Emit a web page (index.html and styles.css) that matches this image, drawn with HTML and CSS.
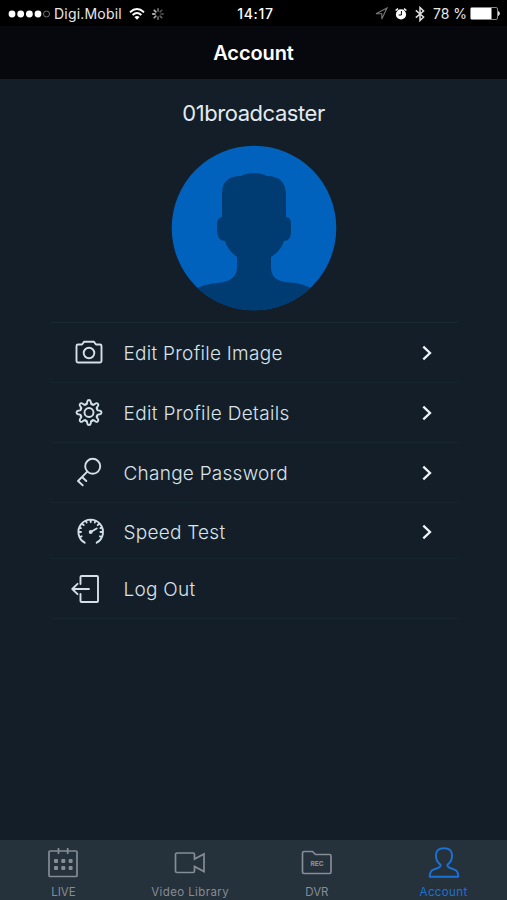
FILE: index.html
```
<!DOCTYPE html>
<html lang="en">
<head>
<meta charset="utf-8">
<title>Account</title>
<link rel="stylesheet" href="styles.css">
</head>
<body>
<div class="app">
  <div class="status">
    <div class="status-left">
      <svg class="dots" width="42" height="10" viewBox="0 0 42 10"><g fill="#fff"><circle cx="4" cy="5" r="3.4"/><circle cx="12.7" cy="5" r="3.4"/><circle cx="21.4" cy="5" r="3.4"/><circle cx="30" cy="5" r="3.4"/></g><circle cx="38.5" cy="5" r="3" fill="none" stroke="#777"/></svg>
      <span class="carrier">Digi.Mobil</span>
      <svg class="wifi" width="16" height="12" viewBox="0 0 16 12"><g fill="none" stroke="#fff" stroke-width="1.9"><path d="M1 4.2Q8-2 15 4.2"/><path d="M3.6 7Q8 3.2 12.4 7"/></g><path d="M5.4 9Q8 6.9 10.6 9L8 11.8z" fill="#fff"/></svg>
      <svg class="spinner" width="14" height="14" viewBox="-7 -7 14 14"><g stroke-width="1.6" stroke-linecap="round"><path d="M0-3v-2.300" stroke="#777"/><path d="M2.1-2.1l1.700-1.700" stroke="#555"/><path d="M3 0h2.300" stroke="#555"/><path d="M2.1 2.1l1.700 1.700" stroke="#666"/><path d="M0 3v2.300" stroke="#777"/><path d="M-2.1 2.1l-1.700 1.700" stroke="#aaa"/><path d="M-3 0h-2.300" stroke="#ddd"/><path d="M-2.1-2.1l-1.700-1.700" stroke="#bbb"/></g></svg>
    </div>
    <span class="clock">14:17</span>
    <div class="status-right">
      <svg class="location" width="13" height="13" viewBox="0 0 13 13"><path d="M1 6.7L12 1 6.8 12V6.7z" fill="none" stroke="#777" stroke-width="1.1"/></svg>
      <svg class="alarm" width="12" height="12" viewBox="0 0 12 12"><circle cx="6" cy="6.4" r="5.1" fill="#fff"/><path d="M.6 2.5L3 .7M11.4 2.5L9 .7" stroke="#fff" stroke-width="1.5"/><path d="M6.4 3v4H3.6" fill="none" stroke="#000"/></svg>
      <svg class="bluetooth" width="10" height="16" viewBox="0 0 10 16"><path d="M.8 4.4L8.6 11 5 14.5v-13L8.6 5 .8 11.6" fill="none" stroke="#ddd" stroke-width="1.5"/></svg>
      <span class="percent">78 %</span>
      <svg class="battery" width="31" height="13" viewBox="0 0 31 13"><rect x=".5" y=".5" width="27" height="12" rx="1.5" fill="none" stroke="#888"/><rect x="1" y="1" width="20.5" height="11" fill="#fff"/><path d="M28.500 4.500q2 2 0 4z" fill="#ddd" stroke="#ddd"/></svg>
    </div>
  </div>
  <header class="title">Account</header>
  <main class="content">
    <h1 class="username">01broadcaster</h1>
    <svg class="avatar" width="166" height="166" viewBox="0 0 166 166">
      <defs><clipPath id="disc"><circle cx="83" cy="83" r="82.3"/></clipPath></defs>
      <circle cx="83" cy="83" r="82.3" fill="#0062bd"/>
      <path clip-path="url(#disc)" fill="#003c72" d="M51 72V49C51 36 58 31 70 31C77 27 89 27 96 31C108 31 115 37 115 50V72C119 72 120 75 120 80V87C120 93 117 96 113 96C111 103 106 108 100 112V122C100 135 109 137 125 138C134 140 142 143 150 148V170H17V148C26 142 35 139 46 138C59 137 66 132 66 122V112C60 107 56 103 54 96C49 96 46 92 46 85V80C46 75 48 72 51 72Z"/>
    </svg>
    <nav class="menu">
      <a class="row">
        <svg class="icon" width="36" height="32" viewBox="0 0 36 32"><path d="M7 7.5h4l2.200-2.800h9.600L25 7.500h4q1.500 0 1.500 1.500v15q0 1.500-1.500 1.500H7q-1.500 0-1.500-1.500v-15q0-1.500 1.500-1.500z"/><circle cx="18" cy="16" r="5.300"/></svg>
        <span class="label image">Edit Profile Image</span>
        <svg class="chevron" width="10" height="16" viewBox="0 0 10 16"><path d="M1.300 1.700L8 8l-6.700 6.300"/></svg>
      </a>
      <a class="row">
        <svg class="icon" width="36" height="32" viewBox="-18 -15.500 36 32">
          <defs><path id="tooth" d="M-3.440-8.310C-2-7.500-2-9.500-1.700-11Q-1.400-12.500 0-12.500T1.700-11C2-9.500 2-7.500 3.440-8.310"/></defs>
          <use href="#tooth"/><use href="#tooth" transform="rotate(45)"/><use href="#tooth" transform="rotate(90)"/><use href="#tooth" transform="rotate(135)"/><use href="#tooth" transform="rotate(180)"/><use href="#tooth" transform="rotate(225)"/><use href="#tooth" transform="rotate(270)"/><use href="#tooth" transform="rotate(315)"/>
          <circle r="4.500"/></svg>
        <span class="label details">Edit Profile Details</span>
        <svg class="chevron" width="10" height="16" viewBox="0 0 10 16"><path d="M1.300 1.700L8 8l-6.700 6.300"/></svg>
      </a>
      <a class="row">
        <svg class="icon" width="36" height="32" viewBox="0 0 36 32"><circle cx="21.700" cy="9.300" r="7.500"/><path d="M16.300 14.600L7 24l4.700 4.300M11 20l4.300 4"/></svg>
        <span class="label">Change Password</span>
        <svg class="chevron" width="10" height="16" viewBox="0 0 10 16"><path d="M1.300 1.700L8 8l-6.700 6.300"/></svg>
      </a>
      <a class="row row-speed">
        <svg class="icon" width="36" height="32" viewBox="0 0 36 32"><path d="M13.700 26.700a12.300 12.300 0 1 1 12 0M19.700 4v2M8 16h2M29.500 16h2M11.400 7.800l1.300 1.300M28 7.800l-1.300 1.300M15 5l.6 1.500M24.400 5l-.6 1.500M8.300 11.500l1.600.6M31 11.500l-1.600.6M9 21l1.600-.7M30.500 21l-1.600-.7M19.700 16l6-3.500"/><circle cx="19.700" cy="16" r="1"/></svg>
        <span class="label">Speed Test</span>
        <svg class="chevron" width="10" height="16" viewBox="0 0 10 16"><path d="M1.300 1.700L8 8l-6.700 6.300"/></svg>
      </a>
      <a class="row row-logout">
        <svg class="icon" width="36" height="32" viewBox="0 0 36 32"><path d="M9.500 11V4q0-1 1-1h15.500q1 0 1 1v24q0 1-1 1H10.500q-1 0-1-1V21M18 16H1.500M6.500 10.800L1.300 16l5.200 5.200"/></svg>
        <span class="label">Log Out</span>
      </a>
    </nav>
  </main>
  <footer class="tabs">
    <div class="tab">
      <svg width="32" height="34" viewBox="0 0 32 34"><g fill="none" stroke="currentColor" stroke-width="1.700"><rect x="2" y="5" width="28" height="25.500" rx="1"/><path d="M11.500 2v6M20.700 2v6"/></g><g fill="currentColor"><rect x="7" y="13" width="4" height="4" rx="1"/><rect x="14.300" y="13" width="4" height="4" rx="1"/><rect x="21.600" y="13" width="4" height="4" rx="1"/><rect x="7" y="20" width="4" height="4" rx="1"/><rect x="14.300" y="20" width="4" height="4" rx="1"/><rect x="21.600" y="20" width="4" height="4" rx="1"/></g></svg>
      <span class="tab-label">LIVE</span>
    </div>
    <div class="tab">
      <svg width="32" height="34" viewBox="0 0 32 34"><path d="M3 7h16q1.500 0 1.500 1.500V13L30 8v17.500l-9.500-5V25q0 1.500-1.500 1.500H3q-1.500 0-1.500-1.500V8.500Q1.500 7 3 7z" fill="none" stroke="currentColor" stroke-width="1.700"/></svg>
      <span class="tab-label video">Video Library</span>
    </div>
    <div class="tab">
      <svg width="32" height="34" viewBox="0 0 32 34"><path d="M3 5.500h8.500l3 3H28.500q1.500 0 1.500 1.500v16q0 1.500-1.500 1.500H3q-1.500 0-1.500-1.500V7q0-1.500 1.500-1.500z" fill="none" stroke="currentColor" stroke-width="1.700"/><text class="rec" x="16" y="20" text-anchor="middle">REC</text></svg>
      <span class="tab-label">DVR</span>
    </div>
    <div class="tab active">
      <svg width="32" height="34" viewBox="0 0 32 34"><path d="M12.500 18.800C9 16 7.700 11.500 8 8.500C8.400 4.300 12 2.300 16 2.300S23.600 4.300 24 8.500C24.300 11.500 23 16 19.500 18.800Q19 21 22 22L26.500 23.600C29.500 24.700 30.300 27 30.300 30.700H1.700C1.700 27 2.500 24.700 5.500 23.600L10 22Q13 21 12.500 18.800Z" fill="none" stroke="currentColor" stroke-width="1.900" stroke-linejoin="round"/></svg>
      <span class="tab-label account">Account</span>
    </div>
  </footer>
</div>
</body>
</html>
```
FILE: styles.css
```
* { box-sizing: border-box; }
body { margin: 0; background: #131e29; font-family: Inter, "Liberation Sans", sans-serif; }
svg { display: block; flex: none; }
.app { width: 507px; height: 900px; display: flex; flex-direction: column; overflow: hidden; }
.status { height: 26px; background: #000; color: #e8e8e8; display: grid; grid-template-columns: 1fr auto 1fr; align-items: center; font-size: 14px; line-height: 26px; white-space: nowrap; }
.status-left { display: flex; align-items: center; padding-left: 8px; }
.carrier { margin: 1px 0 0 4px; width: 68px; letter-spacing: 0.2px; }
.wifi { margin-left: 7px; }
.spinner { margin-left: 6px; }
.clock { color: #fff; font-weight: 500; letter-spacing: 0.7px; padding-left: 4px; }
.status-right { display: flex; align-items: center; justify-content: flex-end; padding-right: 6px; }
.alarm { margin-left: 7px; }
.bluetooth { margin-left: 8px; }
.percent { margin: 1px 3px 0 8px; }
.title { height: 53px; background: #06080d; color: #fff; text-align: center; font-size: 20px; font-weight: 600; line-height: 54px; letter-spacing: -0.1px; }
.content { flex: 1; display: flex; flex-direction: column; align-items: center; background: #131e29; }
.username { margin: 17px 0 15px; font-size: 22px; line-height: 34px; font-weight: 400; letter-spacing: -0.45px; color: #e2eaf1; }
.menu { width: 406px; margin-top: 11px; border-top: 1px solid #1b2a34; }
.row { height: 60px; display: flex; align-items: center; padding: 0 25px 0 20px; border-bottom: 1px solid #182631; }
.row-speed { height: 56px; }
.row-speed .icon, .row-speed .label, .row-speed .chevron { margin-top: 3px; }
.icon { fill: none; stroke: #d3e0e8; stroke-width: 1.9; stroke-linecap: round; stroke-linejoin: round; }
.label { flex: 1; margin-left: 17px; padding-top: 1px; font-size: 19px; font-weight: 300; letter-spacing: 0.25px; color: #d8e3ea; white-space: nowrap; }
.details { letter-spacing: 0.35px; }
.image { letter-spacing: 0.28px; }
.chevron { fill: none; stroke: #edf4f8; stroke-width: 2.3; }
.tabs { height: 60px; background: #25313b; display: grid; grid-template-columns: repeat(4, 1fr); color: #858d95; }
.tab { display: flex; flex-direction: column; align-items: center; padding-top: 6px; }
.tab-label { margin-top: 4px; font-size: 11.5px; line-height: 16px; white-space: nowrap; }
.video { letter-spacing: 0.4px; }
.account { letter-spacing: 0.4px; }
.rec { font-size: 6.5px; font-weight: 800; fill: currentColor; }
.active { color: #1b72d6; }
```
